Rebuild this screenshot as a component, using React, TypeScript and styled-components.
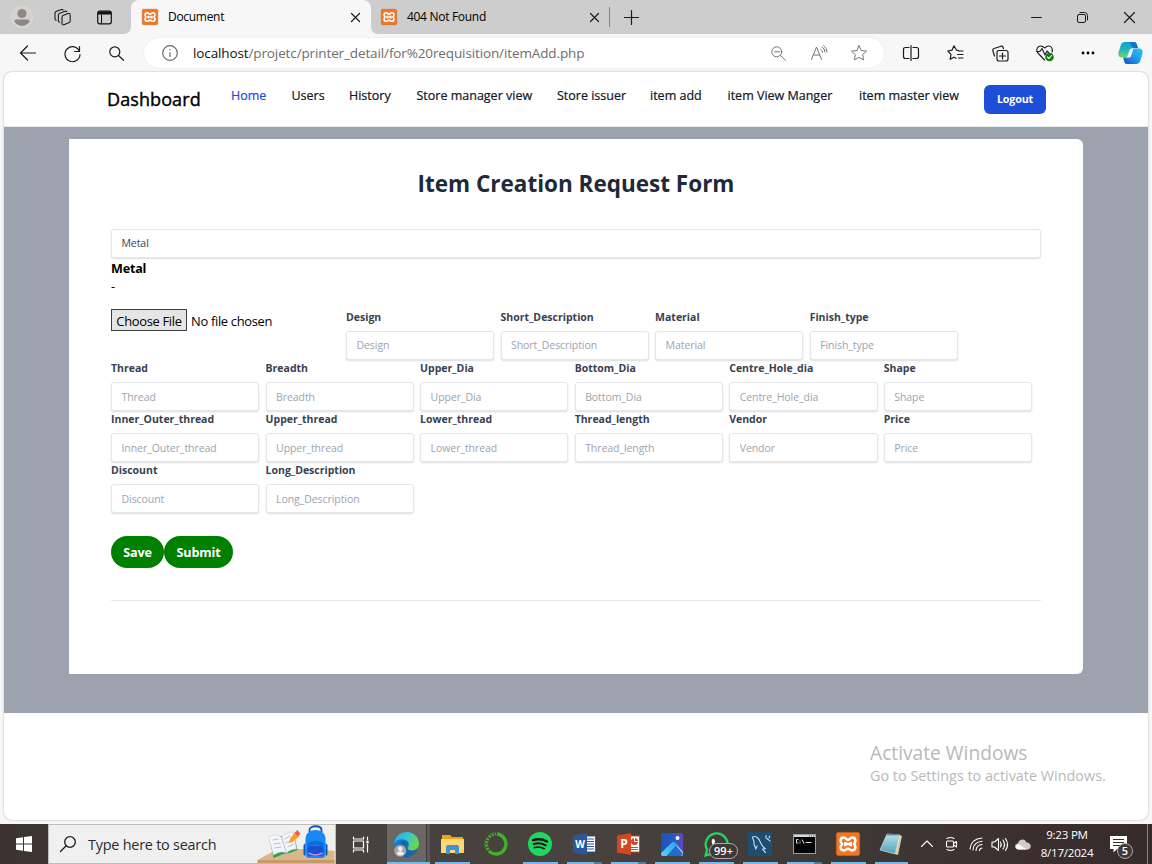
import React from 'react';
import styled, { createGlobalStyle } from 'styled-components';

const Global = createGlobalStyle`
  *, *::before, *::after { box-sizing: border-box; }
  html, body { margin: 0; padding: 0; overflow: hidden; }
  body { font-family: 'Segoe UI', 'Open Sans', 'Noto Sans', sans-serif; color: #000; }
  button, input { font: inherit; letter-spacing: inherit; }
  svg { display: block; flex: none; overflow: visible; }
`;

const Desktop = styled.div`
  width: 1152px; height: 864px; display: flex; flex-direction: column; background: #f7f7f7; white-space: nowrap;
`;

/* ---------- tab strip ---------- */
const TabStrip = styled.div`
  height: 34px; display: flex; background: #cdcdcd; font-size: 12px; flex: none;
`;
const Slot = styled.div<{ $w: number }>`
  width: ${p => p.$w}px; flex: none; display: flex; align-items: center; justify-content: center; height: 100%;
`;
const StripTools = styled.div`
  width: 131px; display: flex; padding-left: 2px; background: #cdcdcd; border-bottom-right-radius: 7px;
`;
const StripRest = styled.div`
  flex: 1; display: flex; background: #cdcdcd; border-bottom-left-radius: 7px;
`;
const TabBacking = styled.div`
  flex: 1; display: flex; background: linear-gradient(#cdcdcd 50%, #f7f7f7 50%);
`;
const Tab = styled.div<{ $active?: boolean }>`
  width: ${p => (p.$active ? 240 : 238)}px; display: flex; align-items: center; padding-left: ${p => (p.$active ? 11 : 10)}px;
  background: ${p => (p.$active ? '#f7f7f7' : 'transparent')};
  border-radius: 8px 8px 0 0;
`;
const TabTitle = styled.span`
  margin-left: 10px; flex: 1; letter-spacing: -0.3px; padding-bottom: 1px;
`;
const TabDivider = styled.div`
  width: 1px; height: 20px; margin-top: 7px; background: #858585;
`;
const WindowControls = styled.div`
  margin-left: auto; display: flex;
`;

/* ---------- toolbar ---------- */
const Toolbar = styled.div`
  height: 38px; flex: none; display: flex; align-items: center; padding-left: 6px; background: #f7f7f7;
`;
const AddressBar = styled.div`
  width: 740px; height: 30px; margin: 0 5px 0 6px; border-radius: 15px; background: #fff; display: flex; align-items: center;
  padding: 0 5px 0 18px; box-shadow: 0 0 2px #e4e4e4; font-size: 13.5px; color: #6d6d6d;
`;
const Url = styled.span`
  margin-left: 15px; flex: 1; letter-spacing: -0.12px;
  b { font-weight: 400; color: #111; }
`;

/* ---------- web page ---------- */
const Page = styled.div`
  width: 1144px; height: 748px; margin: 0 0 4px 4px; border-radius: 8px; background: #fff; overflow: hidden; flex: none;
  box-shadow: 0 0 2px #aaa; position: relative;
`;
const Header = styled.header`
  height: 55px; border-bottom: 1px solid #e5e7eb; display: flex; padding-left: 103px;
`;
const Brand = styled.div`
  width: 124px; font-size: 18px; line-height: 54px; letter-spacing: 0.1px; -webkit-text-stroke: 0.4px currentColor;
`;
const Nav = styled.nav`
  display: flex; font-size: 12.5px; line-height: 47px; -webkit-text-stroke: 0.22px currentColor;
`;
const NavLink = styled.a<{ $w: number; $current?: boolean }>`
  width: ${p => p.$w}px; color: ${p => (p.$current ? '#1d4ed8' : '#111827')};
`;
const Logout = styled.button`
  width: 62px; height: 29px; margin-top: 13px; padding: 0 0 1px; border: 0; border-radius: 6px; background: #1d4ed8; color: #fff;
  font-size: 10.7px; font-weight: 700; line-height: 28px; letter-spacing: -0.15px;
`;
const Backdrop = styled.main`
  height: 586px; background: #9ca3af; padding: 12px 65px 39px;
`;
const Card = styled.section`
  height: 535px; background: #fff; border-radius: 0 6px 6px 0; padding: 28px 42px 0;
`;
const Title = styled.h1`
  margin: 0; height: 62px; font-size: 22.5px; line-height: 34px; font-weight: 700; text-align: center; color: #1f2937;
`;
const Field = styled.input`
  display: block; width: 100%; height: 29px; padding: 0 9.5px 1px; border: 1px solid #e5e7eb; border-radius: 3px; background: #fff;
  font-size: 10.5px; letter-spacing: -0.07px; color: #374151; box-shadow: 0 1px 2px rgba(0, 0, 0, 0.14); outline: none;
  &::placeholder { color: #9ca3af; opacity: 1; }
`;
const Category = styled.div`
  height: 51px; font-size: 12.6px; line-height: 19px;
  b { display: block; font-weight: 700; height: 19px; line-height: 21px; letter-spacing: -0.2px; }
`;
const FieldGrid = styled.div`
  display: flex; flex-wrap: wrap; margin-right: -4px;
`;
const Cell = styled.label<{ $first: boolean }>`
  width: 154.55px; height: 51.1px; padding-right: 6.2px; display: block; font-size: 10.5px; font-weight: 700; line-height: 16px; color: #374151;
  ${Field} { margin-top: 6px; font-weight: 400; padding-bottom: ${p => (p.$first ? 1 : 0)}px; padding-top: ${p => (p.$first ? 0 : 1)}px; }
`;
const FileCell = styled.div`
  width: 235px; height: 51.1px; display: flex; font-size: 12.9px; line-height: 24px; letter-spacing: -0.3px;
`;
const ChooseFile = styled.button`
  width: 76px; height: 22px; margin-right: 4px; padding: 0; border: 1px solid #3f3f46; background: #e5e5e5; color: #000; line-height: 22px;
`;
const Actions = styled.div`
  display: flex; margin-top: 22.6px; padding-bottom: 32px; border-bottom: 1px solid #e5e7eb;
`;
const Pill = styled.button<{ $w: number }>`
  width: ${p => p.$w}px; height: 32px; padding: 1px 0 0; border: 0; border-radius: 16px; background: #008000; color: #fff;
  font-size: 12.6px; font-weight: 700; letter-spacing: -0.15px;
`;
const Watermark = styled.aside`
  position: absolute; left: 866px; top: 668px; color: #b9b9b9; font-size: 14.4px; line-height: 20px;
  strong { display: block; font-size: 19.2px; line-height: 26px; font-weight: 400; }
`;

/* ---------- taskbar ---------- */
const Taskbar = styled.footer`
  height: 40px; flex: none; display: flex; background: linear-gradient(90deg, #3c3330 0, #464240 30%, #49423e 50%, #403a37 70%, #3a2f2e 90%, #372c2c); color: #fff;
`;
const SearchBox = styled.div`
  width: 288px; display: flex; align-items: center; padding-left: 11px; background: #f0f0f0; border: 1px solid #bdbdbd; color: #2b2b2b; font-size: 14.4px;
  span { width: 170px; margin-left: 12px; letter-spacing: -0.22px; }
`;
const TaskButton = styled.div<{ $on?: boolean; $multi?: boolean; $active?: boolean; $w?: number }>`
  width: ${p => p.$w ?? 44}px; height: 40px; position: relative; display: flex; align-items: center; justify-content: center;
  ${p => p.$active && 'background: linear-gradient(90deg, #6b6765 39px, #3f3b39 39px, #3f3b39 40px, #5c5856 40px); padding-right: 4px;'}
  &::after {
    content: ''; position: absolute; bottom: 0; height: 2px; left: ${p => (p.$active ? 0 : 4.5)}px; right: ${p => (p.$active ? 0 : 4.5)}px;
    background: ${p => (p.$on ? (p.$multi ? 'linear-gradient(90deg, #76b9ed 27px, #4f7ea4 27px)' : '#76b9ed') : 'transparent')};
  }
`;
const Tray = styled.div`
  display: flex; margin-left: 4px;
`;
const Clock = styled.div`
  width: 64px; text-align: center; font-size: 11.6px; line-height: 18px; padding-top: 2px; letter-spacing: -0.25px;
`;
const ShowDesktop = styled.div`
  margin-left: auto; width: 5px; border-left: 1px solid #8b8482;
`;
const Badge = styled.span<{ $wide?: boolean }>`
  position: absolute; left: ${p => (p.$wide ? 15 : 22)}px; top: ${p => (p.$wide ? 18.5 : 19)}px; width: ${p => (p.$wide ? 29 : 16)}px; height: 16px;
  border: 1px solid #aaa; border-radius: 8px; background: #3e3937; font-size: 11px; line-height: 14px; text-align: center; font-weight: 600;
`;
const Notify = styled.div`
  width: 46px; margin-left: -4px; position: relative; display: flex; align-items: center; justify-content: center;
`;

/* ---------- icons ---------- */
type LineProps = { d: string; s?: number; w?: number; c?: string; children?: React.ReactNode };
const Line = ({ d, s = 16, w = 1, c = '#1b1b1b', children }: LineProps) => (
  <svg width={s} height={s} viewBox={`0 0 ${s} ${s}`} fill="none" stroke={c} strokeWidth={w} strokeLinecap="round" strokeLinejoin="round">
    <path d={d} />
    {children}
  </svg>
);

const Xampp = ({ s }: { s: number }) => (
  <svg width={s} height={s} viewBox="0 0 24 24">
    <rect x=".4" y=".4" width="23.2" height="23.2" rx="2" fill="#f37623" stroke="#c9621f" strokeWidth=".8" />
    <path d="M8 5.6C5.4 5.6 4.6 7 4.6 8.7c0 1.500.7 2.500 1.500 3.300-.8.8-1.500 1.800-1.500 3.300 0 1.700.8 3.100 3.400 3.100 1.800 0 2.500-1.600 4-1.600s2.200 1.600 4 1.600c2.600 0 3.400-1.400 3.400-3.100 0-1.500-.7-2.500-1.500-3.300.8-.8 1.500-1.800 1.500-3.300 0-1.700-.8-3.100-3.400-3.100-1.800 0-2.500 2.400-4 2.400S9.800 5.600 8 5.600ZM9.300 10v4.300M14.700 10v4.300M9.300 12h5.400" fill="none" stroke="#fff" strokeWidth="2.5" strokeLinejoin="round" />
  </svg>
);

const Profile = () => (
  <svg width="22" height="22" viewBox="0 0 22 22">
    <circle cx="11" cy="11" r="10.5" fill="#d3d0cd" stroke="#dedbd7" />
    <circle cx="11" cy="7.5" r="4.5" fill="#8d8885" />
    <path d="M3.500 15.500c0-1.500 1-2 2.500-2h10c1.500 0 2.500.5 2.500 2-1.500 2.700-4 4.200-7.500 4.200s-6-1.500-7.500-4.200Z" fill="#8d8885" />
  </svg>
);

const Workspaces = () => (
  <Line s={17} w={1.1} d="M9 6.500 14 4.500q2.200-.5 2.200 1.500v6q0 1.200-1 1.600L10 15.700q-2 .5-2-1.500V8q0-1.200 1-1.500ZM5.800 13.200q-1.400 0-1.400-1.500V6q0-1.200 1-1.600L11 2.200q1.200-.3 1.800.4M2.300 11.200q-1.300-.2-1.300-1.500V4.200Q1 3 2 2.600L7.500.6q1.200-.3 1.800.4" />
);

const TabActions = () => (
  <svg width="15" height="15" viewBox="0 0 15 15">
    <rect x=".7" y="1.2" width="13.6" height="12.6" rx="2" fill="none" stroke="#111" strokeWidth="1.2" />
    <path d="M1 4.500V3q0-1.600 1.800-1.600h9.400Q14 1.400 14 3v1.500Z" fill="#111" />
    <path d="M4.500 4.500v9" stroke="#111" />
  </svg>
);

const STAR = 'M8 .6l2.200 4.900 5.300.6-3.900 3.600 1.100 5.300L8 12.400 3.300 15l1.100-5.300L.5 6.100l5.300-.6Z';

const Copilot = () => (
  <svg width="25" height="24" viewBox="0 0 25 24">
    <defs>
      <linearGradient id="cpA" x1="0" y1="0" x2="0" y2="1"><stop offset="0" stopColor="#129ed0" /><stop offset=".5" stopColor="#1fb6c5" /><stop offset="1" stopColor="#6fd65a" /></linearGradient>
      <linearGradient id="cpB" x1="1" y1="0" x2="0" y2="1"><stop offset="0" stopColor="#2fc3f5" /><stop offset=".5" stopColor="#1f9be8" /><stop offset="1" stopColor="#1746c9" /></linearGradient>
    </defs>
    <path d="M7 1h9c2 0 2.500 1.500 3 3l1 3h-4c-3 0-4 1.500-4.700 4L10 16.500H4c-3.500 0-4-2.500-3.500-5L2.500 5C3.300 2.500 4.500 1 7 1Z" fill="url(#cpA)" />
    <path d="M18 23H9c-2 0-2.500-1.500-3-3l-.8-3.500H9c3 0 4-1.500 4.700-4L15 7.500h6c3.500 0 4 2.500 3.500 5l-2 6.500c-.8 2.500-2 4-4.500 4Z" fill="url(#cpB)" />
    <path d="M16 1c2 0 2.500 1.500 3 3l1 3h-5l-2-3c-.5-1.500-1-3-3-3Z" fill="#1473c4" />
    <path d="M12 8h3.200l-2.400 7.500q-.5 1-1.500 1H8.800Z" fill="#f2fbff" />
  </svg>
);

const DeskArt = () => (
  <svg width="78" height="38" viewBox="0 0 77 38">
    <path d="M0 35 20 24h41l16 2v12H0Z" fill="#dcb58b" /><path d="M0 35h77v3H0Z" fill="#c79a6d" />
    <path d="M12 14 23 11l6 0 7-4 4 18-8 3-6 1-10 4Z" fill="#27a34a" />
    <path d="M11 12c5-3 9-3 13 0 3-3 7-5 12-5l3 17c-4 0-7 1-10 4-4-2-8-1-13 2Z" fill="#f3f5fb" stroke="#c7ccd8" strokeWidth=".6" />
    <path d="m24 12 5 16M15 15l6-1M16 19l7-1M17 23l7-1M27 14l6-3M28 18l7-3M30 22l6-3" stroke="#aab1c4" strokeWidth=".8" />
    <path d="m31 18 2-5 5-6 4 4-7 6Z" fill="#ff9c1b" /><path d="m37 8 3-3 3 4-3 2Z" fill="#ef5b4a" />
    <path d="M52 7V5c0-5 12-5 12 0v2" fill="none" stroke="#1252a8" strokeWidth="1.8" />
    <path d="M48 14c0-12 20-12 20 0v15c0 3-2 4-4 4H52c-2 0-4-1-4-4Z" fill="#1689f3" />
    <path d="M48 18v10c0 3-2 4-2 0v-8ZM68 18v10c0 3 2 4 2 0v-8Z" fill="#0f57bc" />
    <path d="M50 18q8-5 16 0v4q-8-4-16 0Z" fill="#0d6be0" />
    <rect x="50" y="21" width="16" height="10" rx="3" fill="#1b4fd1" /><path d="M51 28q7 4 14 0" stroke="#c18cf2" strokeWidth="1.5" fill="none" />
  </svg>
);

const Edge = () => (
  <svg width="25" height="25" viewBox="0 0 24 24">
    <defs>
      <linearGradient id="edA" x1="0" y1="0" x2="1" y2=".4"><stop offset="0" stopColor="#2aa8e2" /><stop offset=".6" stopColor="#36c8c8" /><stop offset="1" stopColor="#67d84e" /></linearGradient>
      <linearGradient id="edB" x1="0" y1="0" x2="1" y2="1"><stop offset="0" stopColor="#1b87d8" /><stop offset="1" stopColor="#0c4d9c" /></linearGradient>
    </defs>
    <path d="M.2 11C.5 5 5 3 10 4c4 1 5 4 4 7-1 2-2 2.500-1.500 4.500 1 3 6 3.500 10 1-2 4.500-6 7.500-11 7.500C5 24 0 18.500.2 11Z" fill="url(#edB)" />
    <path d="M.2 11C1 4 6 0 12 0c7 0 12 5 12 11 0 4-3 6.500-6.500 6.500-3.500 0-4.800-1.200-4-2.500 1.500-2 1-5-1-6.500C9 6 3 6.500.2 11Z" fill="url(#edA)" />
    <path d="M9 8.500C5.500 10 5 15 7.500 19c2 3 5 4.500 8 4.300 2.500-.8 5-2.500 7-6.300-3 1.500-7.500 2-10-1-1.500-2-.5-3.500 0-4.500.5-1.500-1-3.500-3.500-3Z" fill="#1467b5" />
    <circle cx="6" cy="18" r="5.8" fill="#a7a5a3" /><circle cx="6" cy="16" r="2.2" fill="#eee" /><path d="M2.500 21c0-3.500 7-3.500 7 0Q6 24 2.500 21Z" fill="#eee" />
  </svg>
);

const Folder = () => (
  <svg width="23" height="20" viewBox="0 0 23 20">
    <path d="M1 1h8l2 2h11v4H1Z" fill="#e5a51e" /><path d="M0 5h23v14H0Z" fill="#ffd970" />
    <path d="M5 20v-7q0-2 2-2h9q2 0 2 2v7h-4v-4H9v4Z" fill="#3c92dd" />
  </svg>
);

const Ring = () => (
  <svg width="24" height="24" viewBox="0 0 24 24" fill="none" stroke="#43b02a">
    <path d="M13 2a10 10 0 1 1-7 18" strokeWidth="3.4" />
    <path d="M6.500 20A10 10 0 0 1 12 2" strokeWidth="3" strokeDasharray="2 1.3" />
    <path d="M4.500 20.500A11.500 11.500 0 0 1 11 .5" strokeWidth="1" strokeDasharray="1 2" />
  </svg>
);

const Spotify = () => (
  <svg width="24" height="24" viewBox="0 0 24 24" fill="none" stroke="#191414" strokeLinecap="round">
    <circle cx="12" cy="12" r="12" fill="#1ed760" stroke="none" />
    <path d="M5 8.200c4.700-1.400 10-1 14 1.300" strokeWidth="2.4" /><path d="M5.700 12c4-1.200 8.500-.7 12 1.300" strokeWidth="2" /><path d="M6.300 15.600c3.500-1 7-.7 10 1.100" strokeWidth="1.6" />
  </svg>
);

const Office = ({ color, letter, chart }: { color: string; letter: string; chart?: boolean }) => (
  <svg width="23" height="22" viewBox="0 0 23 22">
    <path d="M12 3h10.500v16H12Z" fill="#fff" stroke={color} />
    {chart ? <><circle cx="17.5" cy="8.5" r="3.5" fill={color} /><path d="M17.500 8.500V4.500M17.500 8.500h4" stroke="#fff" /><path d="M14 14.500h7M14 16.500h7" stroke={color} /></>
      : <path d="M14 6h7M14 8.500h7M14 11h7M14 13.500h7M14 16h7" stroke={color} strokeWidth="1.2" />}
    <path d="M0 2.500 14 0v22L0 19.500Z" fill={color} />
    <text x="7" y="15.2" fill="#fff" fontSize={chart ? 12 : 10} fontWeight="700" textAnchor="middle" fontFamily="Open Sans, sans-serif">{letter}</text>
  </svg>
);

const Photos = () => (
  <svg width="22" height="23" viewBox="0 0 22 23">
    <defs>
      <linearGradient id="phA" x1="0" y1="0" x2="1" y2="0"><stop offset="0" stopColor="#1656b5" /><stop offset=".6" stopColor="#2859c4" /><stop offset="1" stopColor="#6348b8" /></linearGradient>
      <linearGradient id="phB" x1="1" y1="0" x2="0" y2="1"><stop offset="0" stopColor="#2e9fe8" /><stop offset="1" stopColor="#5bd2fb" /></linearGradient>
    </defs>
    <rect width="22" height="23" rx="2" fill="url(#phA)" />
    <path d="M11 11q2-2.500 4 0l7 8v2q0 2-2 2H7Z" fill="#b9e4fa" />
    <path d="M0 20 11 9.500q1.500-1.500 3 0l2.500 2.500L6 23H2q-2 0-2-2Z" fill="url(#phB)" />
    <path d="M15 12.500 21.500 20v1q0 2-2 2H5.500Z" fill="#1d6fcd" />
    <circle cx="16.500" cy="5" r="2" fill="#fff" />
  </svg>
);

const WhatsApp = () => (
  <svg width="25" height="25" viewBox="0 0 24 24">
    <path d="M1.500 22.500 3 17A10.500 10.500 0 1 1 7 21Z" fill="none" stroke="#25d366" strokeWidth="2.2" />
    <path d="M8.500 6.500c-3 2.500.5 10 7.500 11 2 0 2.500-2 2-2.700l-2.500-1.300-1.500 1.300c-2-.8-3.500-2.200-4.200-4.100l1-1.300-1-2.500Z" fill="#fff" />
  </svg>
);

const Workbench = () => (
  <svg width="24" height="24" viewBox="0 0 23 23" fill="none" stroke="#c4dced" strokeWidth="1.1">
    <rect width="23" height="23" rx="2" fill="#1d4d72" stroke="none" />
    <path d="M4 5c3.500-2 6.500 1 8 5 1.200 3 2.500 4.500 4.500 6l-2.500.5 3 3.500M4 5c1 2 1.800 3 1.800 6 0 2 1 3 1.700 5l1.500-3M17.500 3q-1 2.500 1 3.700M20.500 3.500v2.500M18.500 6.500l3 2.500" />
  </svg>
);

const Terminal = () => (
  <svg width="23" height="20" viewBox="0 0 23 20">
    <rect x=".5" y=".5" width="22" height="19" fill="#050505" stroke="#9d9d9d" /><path d="M1 1h21v2H1Z" fill="#d8d8d8" /><path d="M16 2h1M18 2h1M20 2h1" stroke="#3a5da8" />
    <path d="M5.500 5.500H3.500v3.500h2M7 6.500v1M7 8.500v1M9 5.500l2 4M12.500 8.500h6" fill="none" stroke="#ddd" />
  </svg>
);

const Notepad = () => (
  <svg width="24" height="23" viewBox="0 0 24 23">
    <defs><linearGradient id="npA" x1="0" y1="0" x2="0" y2="1"><stop offset="0" stopColor="#b5e4ee" /><stop offset="1" stopColor="#4f9fb3" /></linearGradient></defs>
    <path d="m20 2 3 1-4 19-3-1Z" fill="#d8cfa8" />
    <path d="M8 1 21 2l-5 19-15-4Z" fill="url(#npA)" stroke="#e7f4f6" strokeWidth=".6" />
    <path d="M8 1h13v1.500H7.500Z" fill="#76868a" />
  </svg>
);

const TrayIcon = ({ d, s = 16 }: { d: string; s?: number }) => <Line d={d} s={s} c="#fff" w={1.1} />;

const CLOSE = 'M1.500 1.500l8 8M9.500 1.500l-8 8';

/* ---------- data ---------- */
const links: [string, number][] = [
  ['Home', 60.5], ['Users', 57.5], ['History', 67.5], ['Store manager view', 140.5], ['Store issuer', 93],
  ['item add', 77.5], ['item View Manger', 131.5], ['item master view', 125],
];
const fields = [
  'Design', 'Short_Description', 'Material', 'Finish_type',
  'Thread', 'Breadth', 'Upper_Dia', 'Bottom_Dia', 'Centre_Hole_dia', 'Shape',
  'Inner_Outer_thread', 'Upper_thread', 'Lower_thread', 'Thread_length', 'Vendor', 'Price',
  'Discount', 'Long_Description',
];

export default function App() {
  return (
    <Desktop>
      <Global />
      <TabStrip>
        <TabBacking>
          <StripTools>
            <Slot $w={40}><Profile /></Slot>
            <Slot $w={40}><Workspaces /></Slot>
            <Slot $w={44}><TabActions /></Slot>
          </StripTools>
          <Tab $active>
            <Xampp s={16} /><TabTitle>Document</TabTitle>
            <Slot $w={31}><Line s={11} d={CLOSE} w={1.2} /></Slot>
          </Tab>
          <StripRest>
            <Tab>
              <Xampp s={16} /><TabTitle>404 Not Found</TabTitle>
              <Slot $w={29}><Line s={11} d={CLOSE} w={1.2} /></Slot>
            </Tab>
            <TabDivider />
            <Slot $w={43}><Line s={15} d="M7.500.5v14M.5 7.500h14" w={1.2} /></Slot>
            <WindowControls>
              <Slot $w={45}><Line s={11} d="M.5 5.500h10" /></Slot>
              <Slot $w={47}><Line s={11} d="M2 2.500h5q1.500 0 1.500 1.500v5q0 1.500-1.500 1.500H2Q.5 10.500.5 9V4Q.5 2.500 2 2.500ZM3 .5h4.500q3 0 3 3V8" /></Slot>
              <Slot $w={46}><Line s={11} d="M.5.5l10 10M10.500.5l-10 10" w={1.2} /></Slot>
            </WindowControls>
          </StripRest>
        </TabBacking>
      </TabStrip>

      <Toolbar>
        <Slot $w={44}><Line s={16} d="M.5 8h15M7.500 1 .5 8l7 7" w={1.2} /></Slot>
        <Slot $w={44}><Line s={17} d="M15.500 6.500A7.500 7.500 0 1 0 16 9.500M15.500 1.500v5h-5" w={1.2} /></Slot>
        <Slot $w={44}><Line s={15} d="M9.500 9.500l5 4.800" w={1.2}><circle cx="5.8" cy="5.8" r="5" /></Line></Slot>
        <AddressBar>
          <Line s={16} d="M8 7.500v4M8 4.500v.3" c="#6a6a6a" w={1.2}><circle cx="8" cy="8" r="7.3" /></Line>
          <Url><b>localhost</b>/projetc/printer_detail/for%20requisition/itemAdd.php</Url>
          <Slot $w={39}><Line s={15} d="M9.500 9.500l5 4.800M3.500 5.800h5" c="#767676"><circle cx="5.8" cy="5.8" r="5" /></Line></Slot>
          <Slot $w={41}><Line s={16} d="M.5 14.500 5.500 2l5 12.500M2.300 10h6.400M10 4.500q1.500 1 1.500 3M11 2q3 1.500 3 5M12.500.5q3.500 2 3.500 6.500" c="#767676" /></Slot>
          <Slot $w={40}><Line s={16} d={STAR} c="#767676" /></Slot>
        </AddressBar>
        <Slot $w={44}><Line s={16} d="M6 2.500H2.500Q.5 2.500.5 4.500v7q0 2 2 2H6M10 2.500h3.500q2 0 2 2v7q0 2-2 2H10M8 .5v15" w={1.2} /></Slot>
        <Slot $w={45}><Line s={17} d="M11.500 5.500 9.500 5.200 7 .8 5 5.200.8 6l3.200 3.300-.8 5L7 12.300l2 1M11.500 6H16M10.500 9.500H16M11.500 13H16" w={1.2} /></Slot>
        <Slot $w={44}><Line s={17} d="M2.500 11 .8 5.500Q.5 4 2 3.500L9 1.200q1.500-.3 2 1l.5 1.500M7 5.500h7q2 0 2 2v6.500q0 2-2 2H7q-2 0-2-2V7.500q0-2 2-2ZM10.500 8v6M7.500 11h6" w={1.2} /></Slot>
        <Slot $w={45}><Line s={18} d="M8.500 16 1.500 8.500C-.5 5 2 1.500 5.500 2L9 4c2-2.500 5-2.500 6.500-.5 1 1.300 1 3 .5 4.500M.5 7.500H4l2-3 3 6.500 2-4 1.500 1.500" w={1.1}><circle cx="13.5" cy="13" r="4.3" fill="#107c10" stroke="none" /><path d="m11.500 13 1.500 1.500 2.500-3" stroke="#fff" /></Line></Slot>
        <Slot $w={42}><svg width="14" height="4"><circle cx="2" cy="2" r="1.4" /><circle cx="7" cy="2" r="1.4" /><circle cx="12" cy="2" r="1.4" /></svg></Slot>
        <Slot $w={42}><Copilot /></Slot>
      </Toolbar>

      <Page>
        <Header>
          <Brand>Dashboard</Brand>
          <Nav>{links.map(([t, w], i) => <NavLink key={t} $w={w} $current={i === 0}>{t}</NavLink>)}</Nav>
          <Logout>Logout</Logout>
        </Header>
        <Backdrop>
          <Card>
            <Title>Item Creation Request Form</Title>
            <Field defaultValue="Metal" />
            <Category><b>Metal</b>-</Category>
            <FieldGrid>
              <FileCell><ChooseFile>Choose File</ChooseFile>No file chosen</FileCell>
              {fields.map((f, i) => <Cell key={f} $first={i < 4}>{f}<Field placeholder={f} /></Cell>)}
            </FieldGrid>
            <Actions><Pill $w={53}>Save</Pill><Pill $w={69}>Submit</Pill></Actions>
          </Card>
        </Backdrop>
        <Watermark><strong>Activate Windows</strong>Go to Settings to activate Windows.</Watermark>
      </Page>

      <Taskbar>
        <Slot $w={48}><svg width="16" height="16" viewBox="0 0 16 16" fill="#fff"><path d="M0 2.200 7 1.200v6.300H0ZM8 1.100 16 0v7.500H8ZM0 8.500h7v6.300l-7-1ZM8 8.500h8V16l-8-1.100Z" /></svg></Slot>
        <SearchBox>
          <Line s={16} d="M6.200 9.800.5 15.500" w={1.3}><circle cx="10" cy="6" r="5.3" /></Line>
          <span>Type here to search</span>
          <DeskArt />
        </SearchBox>
        <Slot $w={51}><Line s={17} d="M.5 1v2h10V1M.5 16v-2h10v2M.5 5h10v7H.5ZM14.500 1v2.500M14.500 8.500V16M14 5h1v2h-1Z" c="#fff" w={1.2} /></Slot>
        <TaskButton $on $active $w={43}><Edge /></TaskButton>
        <TaskButton $on><Folder /></TaskButton>
        <TaskButton><Ring /></TaskButton>
        <TaskButton $on><Spotify /></TaskButton>
        <TaskButton $on $multi><Office color="#2b579a" letter="W" /></TaskButton>
        <TaskButton $on $multi><Office color="#d24726" letter="P" chart /></TaskButton>
        <TaskButton $on><Photos /></TaskButton>
        <TaskButton $on><WhatsApp /><Badge $wide>99+</Badge></TaskButton>
        <TaskButton $on><Workbench /></TaskButton>
        <TaskButton $on $multi><Terminal /></TaskButton>
        <TaskButton $on><Xampp s={24} /></TaskButton>
        <TaskButton $on $w={42}><Notepad /></TaskButton>
        <Tray>
          <Slot $w={22}><TrayIcon s={12} d="M.5 8.500 6 3l5.500 5.500" /></Slot>
          <Slot $w={26}><TrayIcon s={14} d="M3.500 4h5q1 0 1 1v4q0 1-1 1h-5q-1 0-1-1V5q0-1 1-1ZM9.500 6.500l3-2v5.500l-3-2M3 1.500q3.500-2 7 0M3 12.500q3.500 2 7 0" /></Slot>
          <Slot $w={24}><TrayIcon s={14} d="M1 12Q2 2 13 1M4 13Q4.500 5 13 4.200M7 13.500Q7.500 8 13 7.500M10.500 13.500q0-2 2.500-2.500" /></Slot>
          <Slot $w={23}><TrayIcon s={17} d="M1 6v5h2.500L7.500 14.500v-12L3.500 6ZM9.500 6q1.500 2.500 0 5M12 4q3 4.500 0 9M14.500 2.500q4 6 0 12" /></Slot>
          <Slot $w={24}><svg width="16" height="11" viewBox="0 0 16 11"><path d="M3.500 10.500C-1 10-1 5 3 4.500 4-.5 10-1 11.500 3.500c4.500 0 6 5.500 1.500 7Z" fill="#d0cccb" /><path d="m3 5 9 5.500H3Q-1 9 3 5Z" fill="#fff" /></svg></Slot>
        </Tray>
        <Clock>9:23 PM<br />8/17/2024</Clock>
        <Notify><svg width="17" height="17" viewBox="0 0 17 17"><path d="M0 0h17v13H7l-3.500 3.500V13H0Z" fill="#fff" /><path d="M3 3.500h11M3 6.500h11M3 9.500h7" stroke="#372c2c" strokeWidth="1.2" /></svg><Badge>5</Badge></Notify>
        <ShowDesktop />
      </Taskbar>
    </Desktop>
  );
}
